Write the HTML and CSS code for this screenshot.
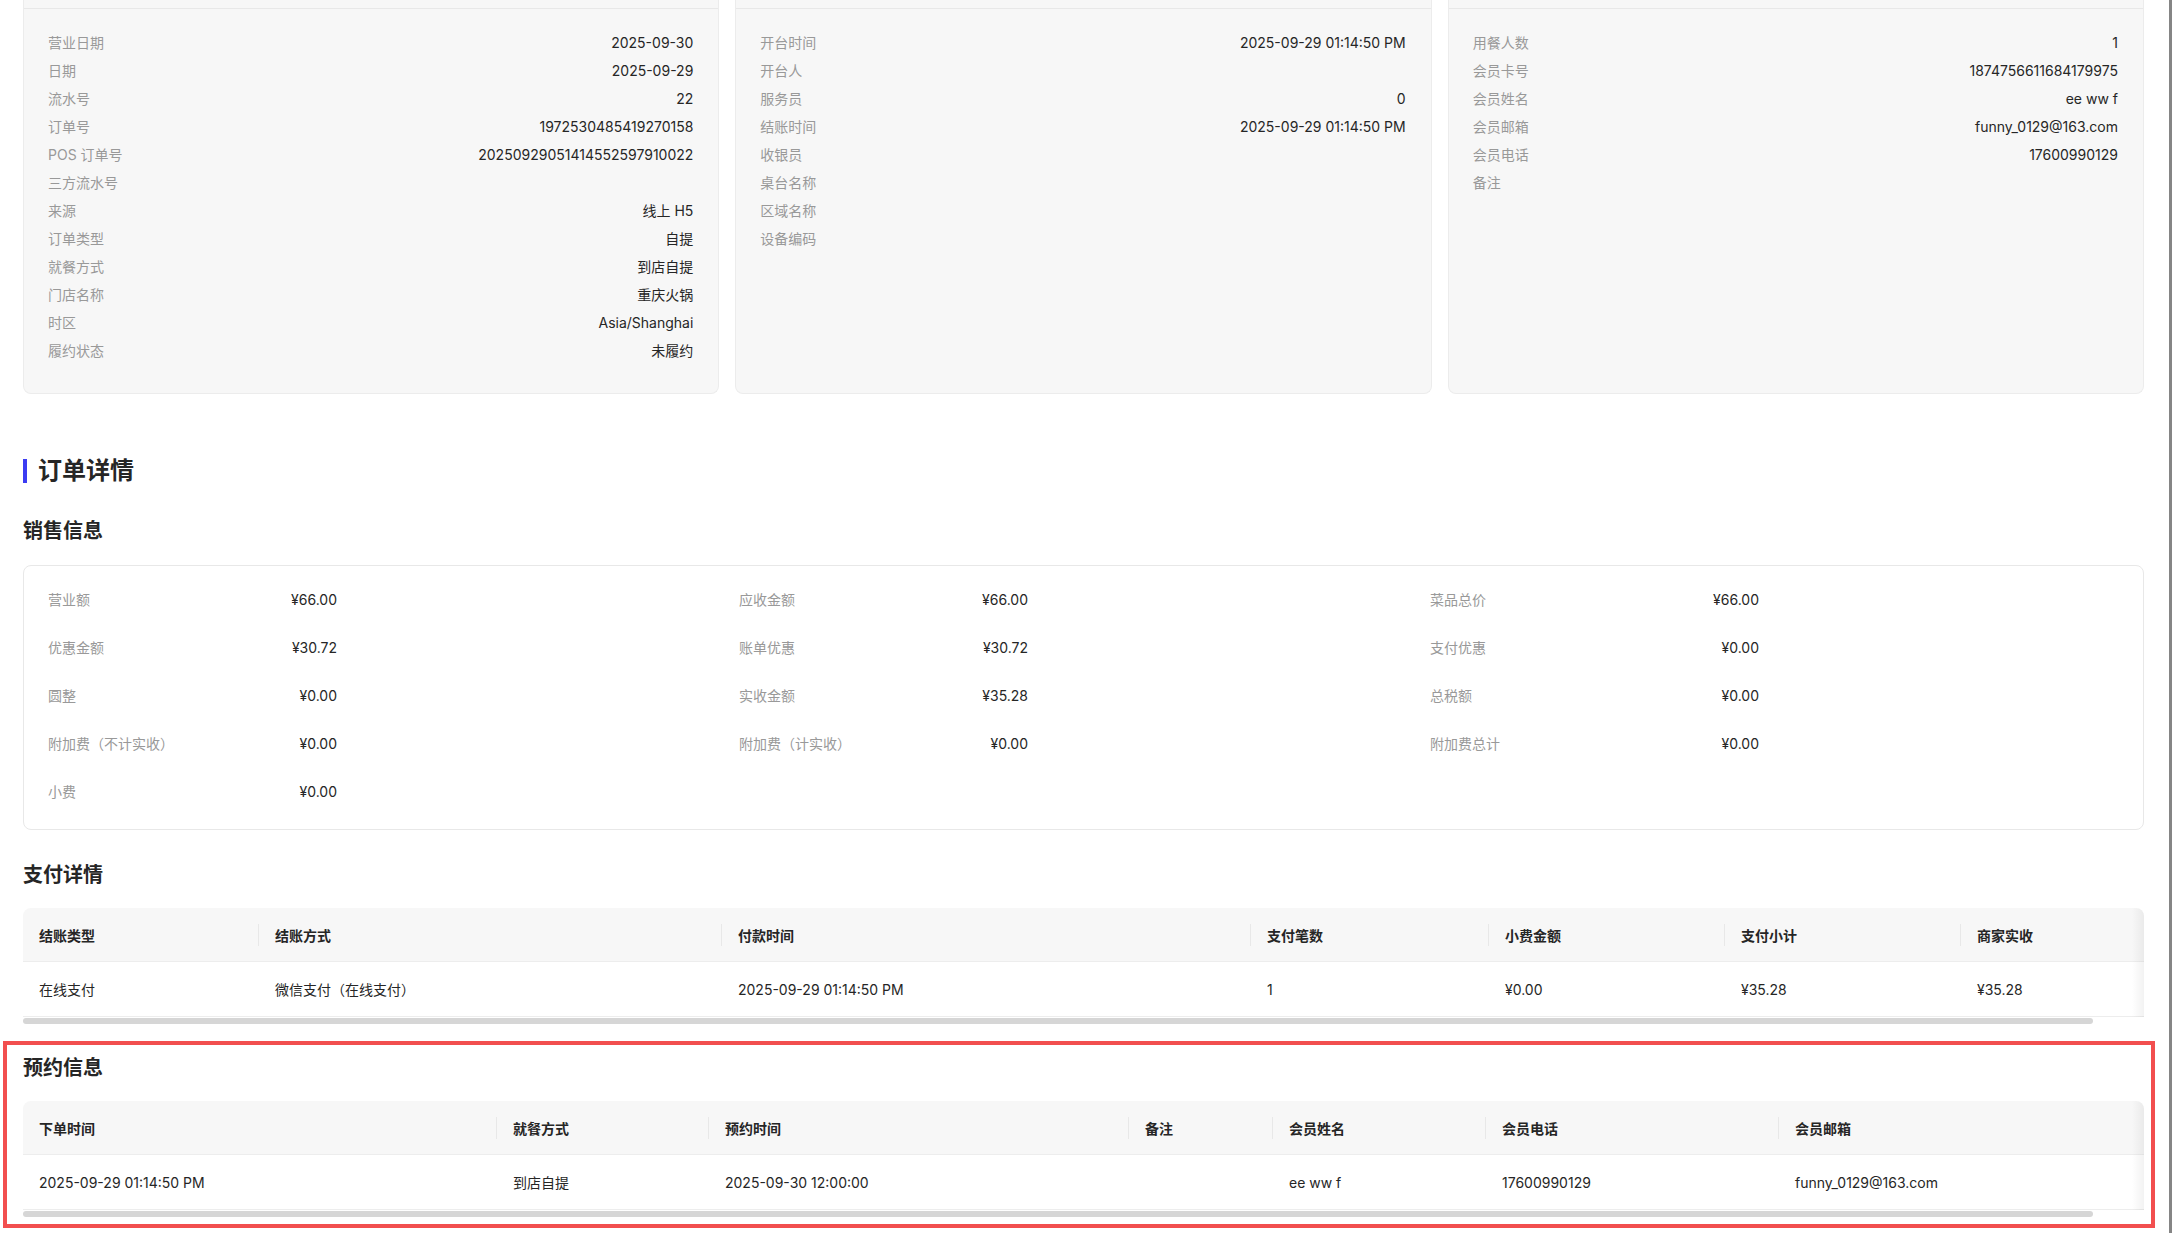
FILE: index.html
```html
<!DOCTYPE html>
<html lang="zh-CN">
<head>
  <meta charset="UTF-8" />
  <meta name="viewport" content="width=device-width, initial-scale=1.0"/>
  <title>订单详情</title>
  <link rel="stylesheet" href="styles.css">
</head>
<body>
  <div class="page">
    <!-- 基本信息 -->
    <div class="info-cards">
      <div class="info-card">
        <div class="card-head"></div>
        <div class="card-body">
          <div class="info-row"><span class="label">营业日期</span><span class="value">2025-09-30</span></div>
          <div class="info-row"><span class="label">日期</span><span class="value">2025-09-29</span></div>
          <div class="info-row"><span class="label">流水号</span><span class="value">22</span></div>
          <div class="info-row"><span class="label">订单号</span><span class="value">1972530485419270158</span></div>
          <div class="info-row"><span class="label">POS 订单号</span><span class="value">20250929051414552597910022</span></div>
          <div class="info-row"><span class="label">三方流水号</span><span class="value"></span></div>
          <div class="info-row"><span class="label">来源</span><span class="value">线上 H5</span></div>
          <div class="info-row"><span class="label">订单类型</span><span class="value">自提</span></div>
          <div class="info-row"><span class="label">就餐方式</span><span class="value">到店自提</span></div>
          <div class="info-row"><span class="label">门店名称</span><span class="value">重庆火锅</span></div>
          <div class="info-row"><span class="label">时区</span><span class="value">Asia/Shanghai</span></div>
          <div class="info-row"><span class="label">履约状态</span><span class="value">未履约</span></div>
        </div>
      </div>
      <div class="info-card">
        <div class="card-head"></div>
        <div class="card-body">
          <div class="info-row"><span class="label">开台时间</span><span class="value">2025-09-29 01:14:50 PM</span></div>
          <div class="info-row"><span class="label">开台人</span><span class="value"></span></div>
          <div class="info-row"><span class="label">服务员</span><span class="value">0</span></div>
          <div class="info-row"><span class="label">结账时间</span><span class="value">2025-09-29 01:14:50 PM</span></div>
          <div class="info-row"><span class="label">收银员</span><span class="value"></span></div>
          <div class="info-row"><span class="label">桌台名称</span><span class="value"></span></div>
          <div class="info-row"><span class="label">区域名称</span><span class="value"></span></div>
          <div class="info-row"><span class="label">设备编码</span><span class="value"></span></div>
        </div>
      </div>
      <div class="info-card">
        <div class="card-head"></div>
        <div class="card-body">
          <div class="info-row"><span class="label">用餐人数</span><span class="value">1</span></div>
          <div class="info-row"><span class="label">会员卡号</span><span class="value">1874756611684179975</span></div>
          <div class="info-row"><span class="label">会员姓名</span><span class="value">ee ww f</span></div>
          <div class="info-row"><span class="label">会员邮箱</span><span class="value">funny_0129@163.com</span></div>
          <div class="info-row"><span class="label">会员电话</span><span class="value">17600990129</span></div>
          <div class="info-row"><span class="label">备注</span><span class="value"></span></div>
        </div>
      </div>
    </div>

    <h2 class="section-title">订单详情</h2>

    <h3 class="sub-title">销售信息</h3>
    <div class="sales-card">
      <div class="sale-item"><span class="label">营业额</span><span class="value">¥66.00</span></div>
      <div class="sale-item"><span class="label">应收金额</span><span class="value">¥66.00</span></div>
      <div class="sale-item"><span class="label">菜品总价</span><span class="value">¥66.00</span></div>
      <div class="sale-item"><span class="label">优惠金额</span><span class="value">¥30.72</span></div>
      <div class="sale-item"><span class="label">账单优惠</span><span class="value">¥30.72</span></div>
      <div class="sale-item"><span class="label">支付优惠</span><span class="value">¥0.00</span></div>
      <div class="sale-item"><span class="label">圆整</span><span class="value">¥0.00</span></div>
      <div class="sale-item"><span class="label">实收金额</span><span class="value">¥35.28</span></div>
      <div class="sale-item"><span class="label">总税额</span><span class="value">¥0.00</span></div>
      <div class="sale-item"><span class="label">附加费（不计实收）</span><span class="value">¥0.00</span></div>
      <div class="sale-item"><span class="label">附加费（计实收）</span><span class="value">¥0.00</span></div>
      <div class="sale-item"><span class="label">附加费总计</span><span class="value">¥0.00</span></div>
      <div class="sale-item"><span class="label">小费</span><span class="value">¥0.00</span></div>
    </div>

    <h3 class="sub-title">支付详情</h3>
    <div class="table-wrap">
      <table class="data-table pay-table">
        <colgroup>
          <col style="width:236px"><col style="width:463px"><col style="width:529px"><col style="width:238px">
          <col style="width:236px"><col style="width:236px"><col style="width:235px">
        </colgroup>
        <thead>
          <tr><th>结账类型</th><th>结账方式</th><th>付款时间</th><th>支付笔数</th><th>小费金额</th><th>支付小计</th><th>商家实收</th></tr>
        </thead>
        <tbody>
          <tr><td>在线支付</td><td>微信支付（在线支付）</td><td>2025-09-29 01:14:50 PM</td><td>1</td><td>¥0.00</td><td>¥35.28</td><td>¥35.28</td></tr>
        </tbody>
      </table>
    </div>
    <div class="hscroll"><div class="hscroll-thumb"></div></div>

    <div class="highlight">
      <h3 class="sub-title">预约信息</h3>
      <div class="table-wrap">
        <table class="data-table">
          <colgroup>
            <col style="width:474px"><col style="width:212px"><col style="width:420px"><col style="width:144px">
            <col style="width:213px"><col style="width:293px"><col style="width:417px">
          </colgroup>
          <thead>
            <tr><th>下单时间</th><th>就餐方式</th><th>预约时间</th><th>备注</th><th>会员姓名</th><th>会员电话</th><th>会员邮箱</th></tr>
          </thead>
          <tbody>
            <tr><td>2025-09-29 01:14:50 PM</td><td>到店自提</td><td>2025-09-30 12:00:00</td><td></td><td>ee ww f</td><td>17600990129</td><td>funny_0129@163.com</td></tr>
          </tbody>
        </table>
      </div>
      <div class="hscroll"><div class="hscroll-thumb"></div></div>
    </div>
  </div>

  <div class="page-scrollbar"></div>
</body>
</html>
```

FILE: styles.css
```css
body {
  margin: 0;
  font-family: 'Inter', 'Noto Sans CJK SC', sans-serif;
  font-size: 14px;
  color: #262626;
  background: #fff;
  overflow: hidden;
}
.page {
  width: 2121px;
  padding: 0 28px 0 23px;
}
.label {
  color: #999;
}
.value {
  color: #262626;
}

/* top info cards */
.info-cards {
  display: grid;
  grid-template-columns: repeat(3, 1fr);
  gap: 16px;
}
.info-card {
  background-color: #f7f7f7;
  border: 1px solid #ececec;
  border-top: none;
  border-radius: 0 0 8px 8px;
}
.card-head {
  height: 8px;
  border-bottom: 1px solid #e8e8e8;
}
.card-body {
  padding: 19px 25px 29px 24px;
  min-height: 336px;
}
.info-row {
  display: flex;
  justify-content: space-between;
  align-items: center;
  height: 28px;
}

/* titles */
.section-title {
  margin: 65px 0 0;
  height: 24px;
  line-height: 24px;
  font-size: 24px;
  font-weight: 600;
  border-left: 4px solid #3c3cf2;
  padding-left: 11px;
  color: #262626;
}
.sub-title {
  margin: 34px 0 0;
  line-height: 28px;
  font-size: 20px;
  font-weight: 600;
  color: #262626;
}

/* sales */
.sales-card {
  margin-top: 20px;
  border: 1px solid #e8e8e8;
  border-radius: 8px;
  padding: 9px 25px 14px 24px;
  display: grid;
  grid-template-columns: 691px 691px 1fr;
}
.sale-item {
  display: flex;
  justify-content: space-between;
  align-items: center;
  height: 48px;
  width: 289px;
}
.sale-item:nth-child(3n) {
  width: 329px;
}
.sales-card + .sub-title {
  margin-top: 31px;
}

/* tables */
.table-wrap {
  margin-top: 19px;
  overflow: hidden;
  border-radius: 8px 8px 0 0;
  position: relative;
}
.table-wrap::after {
  content: "";
  position: absolute;
  top: 0;
  right: 0;
  bottom: 0;
  width: 12px;
  background: linear-gradient(to left, rgba(0, 0, 0, 0.05), rgba(0, 0, 0, 0));
}
.data-table {
  width: 2173px;
  table-layout: fixed;
  border-collapse: collapse;
}
.data-table th {
  position: relative;
  height: 53px;
  padding: 0 16px;
  text-align: left;
  font-weight: 600;
  color: #262626;
  background-color: #f7f7f7;
  border-bottom: 1px solid #ededed;
}
.data-table th:not(:last-child)::before {
  content: "";
  position: absolute;
  top: 50%;
  right: 0;
  width: 1px;
  height: 22px;
  margin-top: -11px;
  background-color: #e8e8e8;
}
.data-table td {
  height: 54px;
  padding: 0 16px;
  color: #262626;
  border-bottom: 1px solid #ededed;
}
.hscroll {
  margin-top: 1px;
  height: 6px;
}
.hscroll-thumb {
  width: 2070px;
  height: 6px;
  border-radius: 3px;
  background-color: #d6d6d6;
}

/* highlighted reservation block */
.highlight {
  margin: 17px -11px 0 -20px;
  padding: 9px 7px 7px 16px;
  border: 4px solid #f24f4f;
}
.highlight .sub-title {
  margin-top: 0;
}

.page-scrollbar {
  position: fixed;
  top: 0;
  right: 0;
  width: 3px;
  height: 100%;
  background-color: #858585;
}
```
